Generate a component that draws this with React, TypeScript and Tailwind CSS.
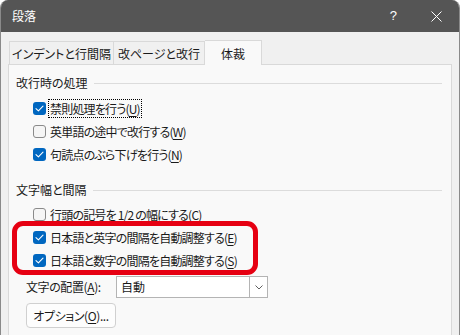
import React from "react";

const font = { fontFamily: '"Noto Sans CJK JP", "Noto Sans", sans-serif' };

function Check({ checked }: { checked: boolean }) {
  if (checked) {
    return (
      <span className="flex h-[13px] w-[13px] shrink-0 items-center justify-center rounded-[3px] bg-[#0067c0]">
        <svg width="9" height="7" viewBox="0 0 9 7" fill="none">
          <path d="M1 3.6 L3.4 5.8 L8 1.2" stroke="white" strokeWidth="1.1" strokeLinecap="round" strokeLinejoin="round" />
        </svg>
      </span>
    );
  }
  return <span className="h-[13px] w-[13px] shrink-0 rounded-[3px] border border-[#8a8a8a] bg-[#f5f5f5]" />;
}

function Row({ checked, label, k, focus }: { checked: boolean; label: string; k: string; focus?: boolean }) {
  return (
    <div className="flex h-[23px] items-center pl-[17px]">
      <Check checked={checked} />
      <span
        className={
          "ml-[3px] whitespace-nowrap px-[1px] leading-[17px] tracking-[-0.8px] " +
          (focus ? "outline outline-1 outline-dotted outline-black" : "")
        }
      >
        {label}(<span className="underline underline-offset-2">{k}</span>)
      </span>
    </div>
  );
}

function Group({ title }: { title: string }) {
  return (
    <div className="flex h-[16px] items-center">
      <span className="whitespace-nowrap leading-[16px]">{title}</span>
      <span className="ml-[6px] mr-[9px] h-px flex-1 bg-[#dcdcdc]" />
    </div>
  );
}

export default function App() {
  return (
    <div className="relative h-[335px] w-[462px] overflow-hidden bg-white text-[12px] text-[#1a1a1a]" style={font}>
      <div className="flex h-[335px] w-[460px] flex-col overflow-hidden rounded-t-[8px] border-x border-[#8a8a8a] bg-[#f0f0f0]">
        <div className="flex h-[32px] shrink-0 items-center bg-[#555555] pl-[11px] text-white">
          <span className="text-[12px] leading-[16px]">段落</span>
          <span className="ml-auto mr-[34px] text-[13px] leading-[16px]" style={{ fontFamily: '"Liberation Sans", sans-serif' }}>?</span>
          <svg width="11" height="11" viewBox="0 0 11 11" className="mr-[17px]">
            <path d="M0.5 0.5 L10.5 10.5 M10.5 0.5 L0.5 10.5" stroke="white" strokeWidth="1" />
          </svg>
        </div>
        <div className="ml-[7px] mt-[8px] flex w-[444px] flex-1 flex-col">
          <div className="relative z-10 flex h-[24px] items-end pl-[1px] [font-feature-settings:'palt']">
            <div className="flex h-[23px] w-[105px] items-center justify-center border border-b-0 border-[#d9d9d9] bg-[#f0f0f0] pt-[1px]">
              インデントと行間隔
            </div>
            <div className="flex h-[23px] w-[91px] items-center justify-center border border-b-0 border-l-0 border-[#d9d9d9] bg-[#f0f0f0] pt-[1px]">
              改ページと改行
            </div>
            <div className="-mb-px flex h-[25px] w-[57px] items-center justify-center border border-b-0 border-l-0 border-[#d9d9d9] bg-[#f9f9f9] pt-[1px]">
              体裁
            </div>
          </div>
          <div className="flex flex-1 flex-col border border-b-0 border-[#d9d9d9] bg-[#f9f9f9] pl-[7px] pt-[10px] [font-feature-settings:'palt']">
            <Group title="改行時の処理" />
            <div className="mt-[6px]">
              <Row checked label="禁則処理を行う" k="U" focus />
              <Row checked={false} label="英単語の途中で改行する" k="W" />
              <Row checked label="句読点のぶら下げを行う" k="N" />
            </div>
            <div className="mt-[16px]">
              <Group title="文字幅と間隔" />
            </div>
            <div className="mt-[5px]">
              <Row checked={false} label="行頭の記号を 1/2 の幅にする" k="C" />
              <Row checked label="日本語と英字の間隔を自動調整する" k="E" />
              <Row checked label="日本語と数字の間隔を自動調整する" k="S" />
            </div>
            <div className="mt-[4px] flex h-[22px] items-center pl-[10px]">
              <span className="w-[90px] whitespace-nowrap leading-[16px] tracking-[-0.4px]">
                文字の配置(<span className="underline underline-offset-2">A</span>):
              </span>
              <div className="flex h-[22px] w-[152px] items-center border border-[#b4b4b4] bg-white">
                <span className="flex-1 pl-[4px] leading-[16px]">自動</span>
                <span className="flex h-full w-[18px] items-center justify-center border-l border-[#b4b4b4]">
                  <svg width="8" height="5" viewBox="0 0 8 5" fill="none">
                    <path d="M0.5 0.5 L4 4 L7.5 0.5" stroke="#606060" strokeWidth="1" />
                  </svg>
                </span>
              </div>
            </div>
            <div className="mt-[5px] pl-[10px]">
              <div className="flex h-[25px] w-[90px] items-center justify-center rounded-[4px] border border-[#d0d0d0] bg-[#fdfdfd] leading-[16px] tracking-[-0.4px]">
                オプション(<span className="underline underline-offset-2">O</span>)...
              </div>
            </div>
          </div>
        </div>
      </div>
      <div className="pointer-events-none absolute left-[12px] top-[221px] h-[54px] w-[246px] rounded-[11px] border-[5px] border-[#e60012]" />
    </div>
  );
}
